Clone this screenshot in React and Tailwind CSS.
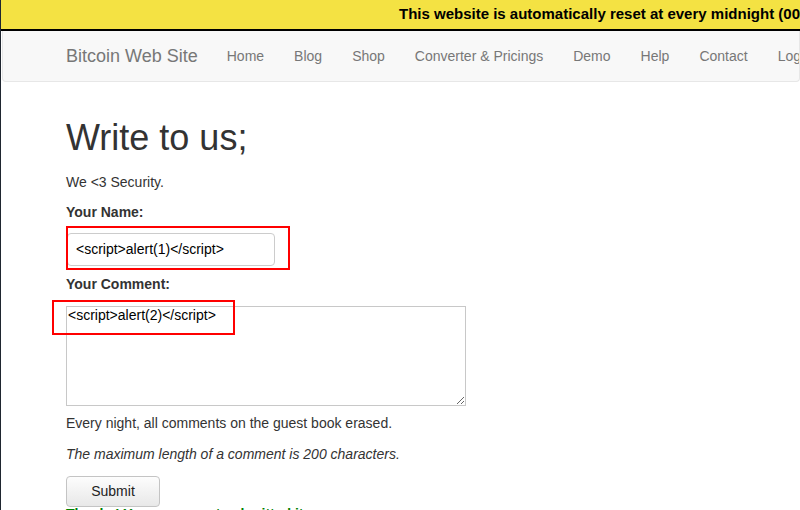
export default function App() {
  const links = ['Home', 'Blog', 'Shop', 'Converter & Pricings', 'Demo', 'Help', 'Contact', 'Login'];

  return (
    <div className="h-[510px] w-[800px] overflow-hidden bg-white border-l border-[#1f2630] font-['Liberation_Sans',Arial,sans-serif] text-[14px] text-[#333]">
      {/* reset banner */}
      <div className="h-[31px] bg-[#f4e243] border-b-2 border-black flex items-center overflow-hidden whitespace-nowrap pl-[398px]">
        <span className="text-[15px] font-bold text-black">This website is automatically reset at every midnight (00:00 - UTC)</span>
      </div>

      {/* navbar */}
      <nav className="h-[51px] ml-px bg-[#f8f8f8] border border-t-0 border-[#e7e7e7] rounded-b flex items-center whitespace-nowrap overflow-hidden pl-[63px]">
        <span className="text-[18px] text-[#777] mr-[29px]">Bitcoin Web Site</span>
        <ul className="flex gap-[30px] text-[14px] text-[#777]">
          {links.map((l) => (
            <li key={l}>{l}</li>
          ))}
        </ul>
      </nav>

      <div className="pl-[65px]">
        <h1 className="text-[36px] leading-[40px] mt-[36px] text-[#333]">Write to us;</h1>
        <p className="mt-[14px] leading-[20px]">We &lt;3 Security.</p>
        <p className="mt-[10px] leading-[20px] font-bold">Your Name:</p>
        <div className="relative mt-[11px] w-[208px] ml-px">
          <div className="h-[33px] rounded border border-[#ccc] flex items-center px-[8px] text-black">
            &lt;script&gt;alert(1)&lt;/script&gt;
          </div>
          <div className="absolute -left-px -top-[7px] w-[224px] h-[44px] border-2 border-[#f00]" />
        </div>
        <p className="mt-[8px] leading-[20px] font-bold">Your Comment:</p>
        <div className="relative mt-[12px] w-[400px]">
          <textarea
            readOnly
            defaultValue="<script>alert(2)</script>"
            className="block w-[400px] h-[100px] border border-[#c8c8c8] px-[1px] py-0 text-[14px] leading-[17px] text-black outline-none font-['Liberation_Sans',Arial,sans-serif]"
          />
          <div className="absolute -left-[14px] -top-[6px] w-[183px] h-[35px] border-2 border-[#f00] pointer-events-none" />
        </div>
        <p className="mt-[7px] leading-[20px]">Every night, all comments on the guest book erased.</p>
        <p className="mt-[11px] leading-[20px] italic">The maximum length of a comment is 200 characters.</p>
        <button className="mt-[12px] w-[94px] h-[31px] rounded border border-[#c4c4c4] bg-gradient-to-b from-[#fdfdfd] to-[#e8e8e8] text-[14px] text-[#222]">
          Submit
        </button>
        <p className="-mt-[3px] leading-[20px] font-bold text-[#008000]">Thanks! Your comment submitted it.</p>
      </div>
    </div>
  );
}
